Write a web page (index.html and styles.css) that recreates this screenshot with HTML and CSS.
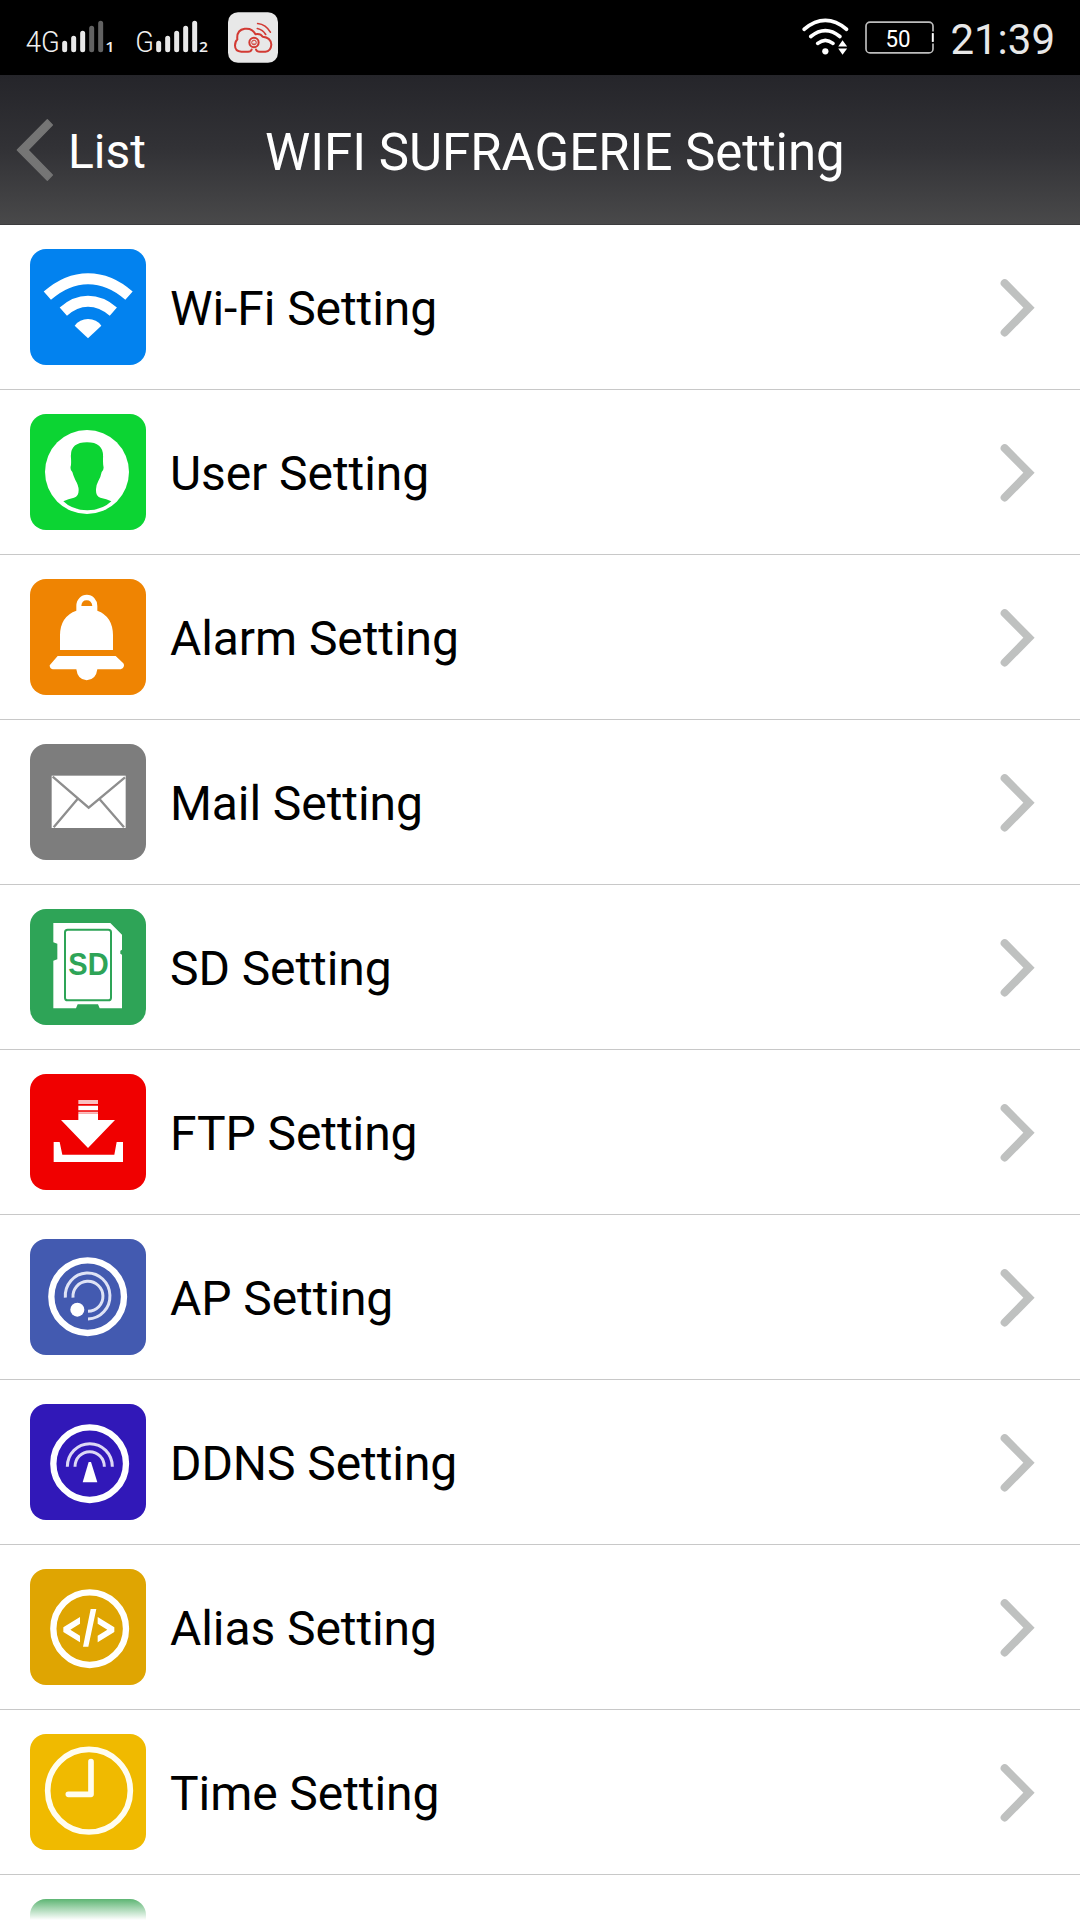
FILE: index.html
```html
<!DOCTYPE html>
<html lang="en">
<head>
<meta charset="utf-8">
<title>WIFI SUFRAGERIE Setting</title>
<link rel="stylesheet" href="styles.css">
</head>
<body>
<div class="screen">
  <div class="status">
    <svg class="signals" viewBox="0 0 630 225">
      <g class="net">
        <text x="77" y="156" textLength="102" lengthAdjust="spacingAndGlyphs">4G</text>
        <text x="406" y="156" textLength="56" lengthAdjust="spacingAndGlyphs">G</text>
      </g>
      <g class="bars">
        <path d="M194 130V149M221 115V149M248 100V149"/>
        <path class="off" d="M275 85V149M302 70V149"/>
        <path d="M476 130V149M503 115V149M530 100V149M557 85V149M584 70V149"/>
      </g>
      <g class="sim">
        <text x="316" y="156" textLength="28" lengthAdjust="spacingAndGlyphs">1</text>
        <text x="597" y="156" textLength="27" lengthAdjust="spacingAndGlyphs">2</text>
      </g>
    </svg>
    <svg class="app" viewBox="684 37 150 152">
      <rect x="684" y="37" width="150" height="152" rx="30" fill="#e8e8e8"/>
      <g fill="none" stroke="#d23a33" stroke-width="6" stroke-linecap="round" stroke-linejoin="round">
        <path d="M755 149Q753 156 744 156H724Q705 154 705 137Q705 125 712 119Q709 91 734 87Q757 84 766 103Q782 100 788 111Q812 113 814 134Q813 154 796 156H780Q770 156 768 149"/>
        <circle cx="762" cy="128" r="14"/>
        <path d="M773 71Q798 74 811 97M772 86Q789 90 797 104" stroke-width="5"/>
      </g>
      <circle cx="762" cy="128" r="7" fill="none" stroke="#d23a33" stroke-width="3"/>
      <path d="M758 126h2M765 126h2M758 131q4 3 8 0" fill="none" stroke="#d23a33" stroke-width="2"/>
    </svg>
    <span class="spacer"></span>
    <svg class="wifi" viewBox="68 52 141 118">
      <g fill="none" stroke="#fff" stroke-width="11" stroke-linecap="round">
        <path d="M74 89Q138 36 202 89M94 111Q138 75 182 111M115 132Q138 113 161 132"/>
      </g>
      <circle cx="138" cy="156" r="9.5" fill="#fff"/>
      <path d="M177 141L190 122L204 141ZM177 147H204L190 166Z" fill="#fff"/>
    </svg>
    <svg class="battery" viewBox="257 62 206 98">
      <rect x="260" y="65" width="200" height="92" rx="12" fill="none" stroke="#bdbdbd" stroke-width="5"/>
      <path d="M455 93H463V98H455ZM455 124H463V129H455Z" fill="#000"/>
      <path d="M459 98V124" stroke="#fff" stroke-width="5"/>
      <text x="318" y="138" textLength="75" lengthAdjust="spacingAndGlyphs">50</text>
    </svg>
    <span class="clock">21:39</span>
  </div>

  <div class="header">
    <svg class="back" viewBox="48 354 114 192"><path d="M142 359L157 375L84 450L157 525L142 541L52 450Z"/></svg>
    <span class="back-label">List</span>
    <span class="title">WIFI SUFRAGERIE Setting</span>
  </div>

  <div class="list">
    <div class="row">
      <svg class="tile blue" viewBox="90 72 348 348">
        <path fill="none" stroke="#fff" stroke-width="33" d="M142 212Q200 161 264 161Q330 161 387 212M190 260Q225 229 264 229Q304 229 340 260"/>
        <path fill="#fff" d="M224 302Q239 282 264 282Q290 282 304 302L264 340Z"/>
      </svg>
      <span class="label">Wi-Fi Setting</span>
      <svg class="chev" viewBox="120 160 108 176"><path d="M134 175L207 248.500L134 323"/></svg>
    </div>
    <div class="row">
      <svg class="tile green" viewBox="90 567 348 348">
        <circle cx="261" cy="741" r="126" fill="#fff"/>
        <path fill="#0cd433" d="M190 829Q205 822 222 818Q236 815 236 795Q236 782 226 765Q220 752 217 741Q210 735 212 724Q214 722 213 700Q208 652 261 652Q313 652 309 700Q309 720 310 722Q313 735 305 741Q302 757 295 768Q287 782 288 797Q288 814 301 818Q320 822 334 829Q307 855 262 856Q217 855 190 829Z"/>
      </svg>
      <span class="label">User Setting</span>
      <svg class="chev" viewBox="120 160 108 176"><path d="M134 175L207 248.500L134 323"/></svg>
    </div>
    <div class="row">
      <svg class="tile orange" viewBox="90 72 348 348">
        <path fill="#fff" d="M180 285V240Q181 184 229 167V153A31 33 0 0 1 292 153V167Q338 184 339 240V285ZM173 303H347L370 325Q375 332 368 340L362 343H292Q288 375 260 376Q233 375 229 343H158Q149 341 149 331Z"/>
        <path fill="#ef8402" d="M244 153Q245 136 260 136Q275 136 277 153Z"/>
      </svg>
      <span class="label">Alarm Setting</span>
      <svg class="chev" viewBox="120 160 108 176"><path d="M134 175L207 248.500L134 323"/></svg>
    </div>
    <div class="row">
      <svg class="tile gray" viewBox="90 567 348 348">
        <rect x="155" y="662" width="222" height="157" fill="#fff"/>
        <path fill="none" stroke="#8e8e8e" stroke-width="7" d="M158 665L266 758L375 667M232 733L161 817M299 733L372 817"/>
      </svg>
      <span class="label">Mail Setting</span>
      <svg class="chev" viewBox="120 160 108 176"><path d="M134 175L207 248.500L134 323"/></svg>
    </div>
    <div class="row">
      <svg class="tile forest" viewBox="90 72 348 348">
        <path fill="#fff" d="M160 114H331L366 149V194L361 197V206L366 209V370H299L294 358H233L228 370H160V227L172 223V176L160 172Z"/>
        <rect x="195" y="134" width="138" height="212" rx="8" fill="none" stroke="#2ea457" stroke-width="6"/>
        <text class="sd" x="205" y="269" textLength="121" lengthAdjust="spacingAndGlyphs">SD</text>
      </svg>
      <span class="label">SD Setting</span>
      <svg class="chev" viewBox="120 160 108 176"><path d="M134 175L207 248.500L134 323"/></svg>
    </div>
    <div class="row">
      <svg class="tile red" viewBox="90 567 348 348">
        <path fill="#fff" d="M235 686H294V705H345L264 789L183 705H235ZM235 662H294V676H235ZM161 771H179L187 809H343L350 771H369V831H161Z"/>
        <path fill="#fff" opacity=".75" d="M235 645H294V657H235ZM235 680H294V686H235Z"/>
      </svg>
      <span class="label">FTP Setting</span>
      <svg class="chev" viewBox="120 160 108 176"><path d="M134 175L207 248.500L134 323"/></svg>
    </div>
    <div class="row">
      <svg class="tile indigo" viewBox="90 72 348 348">
        <circle class="ring" cx="263" cy="245" r="109"/>
        <path fill="none" stroke="#dfe3f5" stroke-width="9" d="M196 248A67 69 0 1 1 264 312M219 248A45 45 0 1 1 264 289"/>
        <circle cx="232" cy="284" r="21" fill="#fff"/>
      </svg>
      <span class="label">AP Setting</span>
      <svg class="chev" viewBox="120 160 108 176"><path d="M134 175L207 248.500L134 323"/></svg>
    </div>
    <div class="row">
      <svg class="tile violet" viewBox="90 567 348 348">
        <circle class="ring" cx="269" cy="746" r="109"/>
        <path fill="none" stroke="#ddd8f5" stroke-width="9" d="M202 755A67.500 69 0 0 1 337 755M225 755A44 45 0 0 1 313 755"/>
        <path fill="#fff" d="M266 741H273L292 802H248Z"/>
      </svg>
      <span class="label">DDNS Setting</span>
      <svg class="chev" viewBox="120 160 108 176"><path d="M134 175L207 248.500L134 323"/></svg>
    </div>
    <div class="row">
      <svg class="tile amber" viewBox="90 72 348 348">
        <circle class="ring" cx="269" cy="251" r="109"/>
        <path fill="#fff" d="M240 216V236L211 254L240 272V292L190 261V247ZM293 216V236L322 254L293 272V292L343 261V247ZM272 192H289L265 305H249Z"/>
      </svg>
      <span class="label">Alias Setting</span>
      <svg class="chev" viewBox="120 160 108 176"><path d="M134 175L207 248.500L134 323"/></svg>
    </div>
    <div class="row">
      <svg class="tile yellow" viewBox="90 567 348 348">
        <circle class="ring thin" cx="267" cy="737" r="124"/>
        <path fill="none" stroke="#fffdf0" stroke-width="17" stroke-linecap="round" stroke-linejoin="round" d="M273 650V748H205"/>
      </svg>
      <span class="label">Time Setting</span>
      <svg class="chev" viewBox="120 160 108 176"><path d="M134 175L207 248.500L134 323"/></svg>
    </div>
    <div class="row">
      <div class="tile fade"></div>
    </div>
  </div>
</div>
</body>
</html>
```

FILE: styles.css
```css
* { box-sizing: border-box; }
body { margin: 0; background: #fff; font-family: Roboto, sans-serif; }
svg { display: block; flex: none; }
.screen { width: 1080px; height: 1920px; overflow: hidden; display: flex; flex-direction: column; }

.status { height: 75px; flex: none; background: #000; display: flex; align-items: flex-start; padding-right: 25px; }
.signals { width: 210px; height: 75px; }
.net { fill: #f0f0f0; font: 300 89px Roboto, sans-serif; }
.sim { fill: #f0f0f0; font: 600 43px "Open Sans", sans-serif; }
.bars { fill: none; stroke: #e8e8e8; stroke-width: 15; stroke-linecap: round; }
.off { stroke: #626262; }
.app { width: 50px; height: 51px; margin: 12px 0 0 18px; }
.spacer { flex: 1; }
.wifi { width: 47px; height: 39px; margin: 17px 16px 0 0; }
.battery { width: 69px; height: 33px; margin: 21px 16px 0 0; }
.battery text { fill: #fff; font: 400 72px Roboto, sans-serif; }
.clock { color: #e8e8e8; font-size: 42px; line-height: 49px; margin-top: 15px; white-space: nowrap; }

.header { height: 150px; flex: none; display: flex; align-items: center; padding-left: 16px; color: #fff; background: linear-gradient(#25252a, #323236 50%, #49494a); border-bottom: 1px solid #3c3c3e; white-space: nowrap; }
.back { width: 38px; height: 64px; }
.back path { fill: #757575; stroke: #757575; stroke-width: 4; stroke-linejoin: round; }
.back-label { font-size: 48px; width: 197px; margin-left: 14px; padding-top: 4px; }
.title { font-size: 51px; padding-top: 6px; letter-spacing: -0.03px; }

.list { flex: none; }
.row { height: 165px; display: flex; align-items: center; padding: 0 44px 0 30px; border-bottom: 1px solid #c8c8c8; }
.tile { width: 116px; height: 116px; border-radius: 16px; flex: none; }
.label { flex: 1; margin-left: 24px; font-size: 48px; line-height: 56px; padding-top: 4px; letter-spacing: -0.08px; color: #000; white-space: nowrap; }
.chev { width: 36px; height: 59px; }
.chev path { fill: none; stroke: #bfc1c0; stroke-width: 24; stroke-linecap: round; stroke-linejoin: miter; }
.ring { fill: none; stroke: #fff; stroke-width: 19; }
.thin { stroke: #fffdf0; stroke-width: 17; }
.sd { fill: #2ea457; font: 700 92px "Liberation Sans", sans-serif; }

.blue { background: #0282ef; }
.green { background: #0cd433; }
.orange { background: #ef8402; }
.gray { background: #7d7d7d; }
.forest { background: #2ea457; }
.red { background: #f00000; }
.indigo { background: #435ab0; }
.violet { background: #3118b8; }
.amber { background: #dfa502; }
.yellow { background: #f0ba00; }
.fade { background: linear-gradient(#5db573, #fff 21px); }
```
